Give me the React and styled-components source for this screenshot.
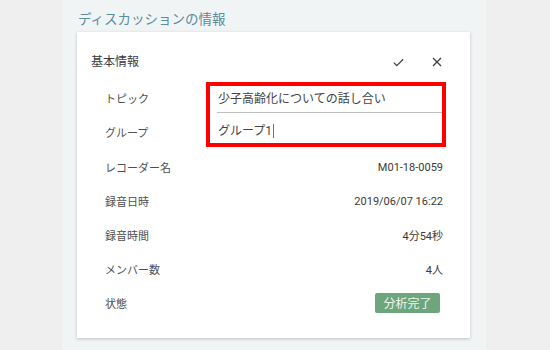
import React from 'react';
import styled, { createGlobalStyle } from "styled-components";

const GlobalStyle = createGlobalStyle`
    html, body {
        margin: 0;
        padding: 0;
        background: #efefef;
        font-family: Roboto, "Noto Sans CJK JP", sans-serif;
    }
`;

const Page = styled.div`
    width: 550px;
    height: 350px;
    overflow: hidden;
    display: flex;
`;

const Panel = styled.div`
    margin-left: 62px;
    width: 424px;
    height: 350px;
    background: #f1f4f5;
    box-sizing: border-box;
    padding: 8px 16px 0 15px;
`;

const Title = styled.h1`
    margin: 0 0 0 1px;
    font-size: 13.5px;
    line-height: 22px;
    font-weight: 400;
    color: #5b8b9c;
    height: 24px;
`;

const Card = styled.div`
    background: #fff;
    height: 306px;
    box-shadow: 0 1px 3px rgba(0, 0, 0, 0.22);
    box-sizing: border-box;
    display: flex;
    flex-direction: column;
`;

const Header = styled.div`
    height: 50px;
    box-sizing: border-box;
    padding: 21px 27px 0 14px;
    display: flex;
    align-items: flex-start;
`;

const HeaderTitle = styled.div`
    flex: 1;
    font-size: 12px;
    line-height: 18px;
    color: #3c3c3c;
`;

const IconButton = styled.button`
    border: 0;
    background: none;
    padding: 0;
    width: 12px;
    height: 18px;
    display: flex;
    align-items: center;
    justify-content: center;
    margin-left: ${(p) => p.$gap || 0}px;
    color: #424242;
`;

const EditGrid = styled.div`
    display: grid;
    grid-template-columns: 101px 240px;
    grid-template-rows: 33px 32px;
    padding-left: 28px;
`;

const EditLabel = styled.div`
    grid-column: 1;
    font-size: 11px;
    color: #4f4f4f;
    padding-top: ${(p) => p.$top}px;
    line-height: 16px;
`;

const RedBox = styled.div`
    grid-column: 2;
    grid-row: 1 / span 2;
    border: 4px solid #ff0000;
    display: flex;
    flex-direction: column;
`;

const Field = styled.div`
    margin-left: 7px;
    padding-left: 1px;
    font-size: 12px;
    color: #444;
    height: ${(p) => p.$height}px;
    box-sizing: border-box;
    padding-top: ${(p) => p.$top}px;
    line-height: 18px;
    border-bottom: ${(p) => (p.$underline ? "1px solid #bdbdbd" : "0")};
    display: flex;
    align-items: center;
    align-self: stretch;
`;

const FieldText = styled.span`
    display: flex;
    align-items: center;
    height: 18px;
`;

const Caret = styled.span`
    display: inline-block;
    width: 1px;
    height: 14px;
    margin-left: 1px;
    background: #5f7f5f;
`;

const Rows = styled.div`
    padding: 3px 27px 0 28px;
    display: flex;
    flex-direction: column;
`;

const Row = styled.div`
    height: 34px;
    display: flex;
    align-items: center;
    justify-content: space-between;
    font-size: 11px;
`;

const Label = styled.span`
    color: #4f4f4f;
`;

const Value = styled.span`
    color: #3a3a3a;
`;

const Badge = styled.span`
    width: 65px;
    height: 20px;
    margin-right: 3px;
    margin-top: -1px;
    border-radius: 2px;
    background: #6da67c;
    color: #eef6ef;
    font-size: 12px;
    display: flex;
    align-items: center;
    justify-content: center;
    box-sizing: border-box;
`;

const CheckIcon = () => (
    <svg width="11" height="9" viewBox="0 0 11 9">
        <polyline points="0.8,4.6 3.8,7.6 10.2,1.2" fill="none" stroke="currentColor" strokeWidth="1.3" />
    </svg>
);

const CloseIcon = () => (
    <svg width="10" height="10" viewBox="0 0 10 10">
        <path d="M1 1 L9 9 M9 1 L1 9" fill="none" stroke="currentColor" strokeWidth="1.3" />
    </svg>
);

const rows = [
    { label: "レコーダー名", value: "M01-18-0059" },
    { label: "録音日時", value: "2019/06/07 16:22" },
    { label: "録音時間", value: "4分54秒" },
    { label: "メンバー数", value: "4人" },
];

const App = () => {
    return (
        <>
            <GlobalStyle />
            <Page>
                <Panel>
                    <Title>ディスカッションの情報</Title>
                    <Card>
                        <Header>
                            <HeaderTitle>基本情報</HeaderTitle>
                            <IconButton aria-label="保存"><CheckIcon /></IconButton>
                            <IconButton aria-label="閉じる" $gap={27}><CloseIcon /></IconButton>
                        </Header>
                        <EditGrid>
                            <EditLabel $top={10}>トピック</EditLabel>
                            <RedBox>
                                <Field $height={27} $top={0} $underline>
                                    <FieldText>少子高齢化についての話し合い</FieldText>
                                </Field>
                                <Field $height={30} $top={5}>
                                    <FieldText>グループ1<Caret /></FieldText>
                                </Field>
                            </RedBox>
                            <EditLabel $top={11}>グループ</EditLabel>
                        </EditGrid>
                        <Rows>
                            {rows.map((row) => (
                                <Row key={row.label}>
                                    <Label>{row.label}</Label>
                                    <Value>{row.value}</Value>
                                </Row>
                            ))}
                            <Row>
                                <Label>状態</Label>
                                <Badge>分析完了</Badge>
                            </Row>
                        </Rows>
                    </Card>
                </Panel>
            </Page>
        </>
    );
};

export default App;
